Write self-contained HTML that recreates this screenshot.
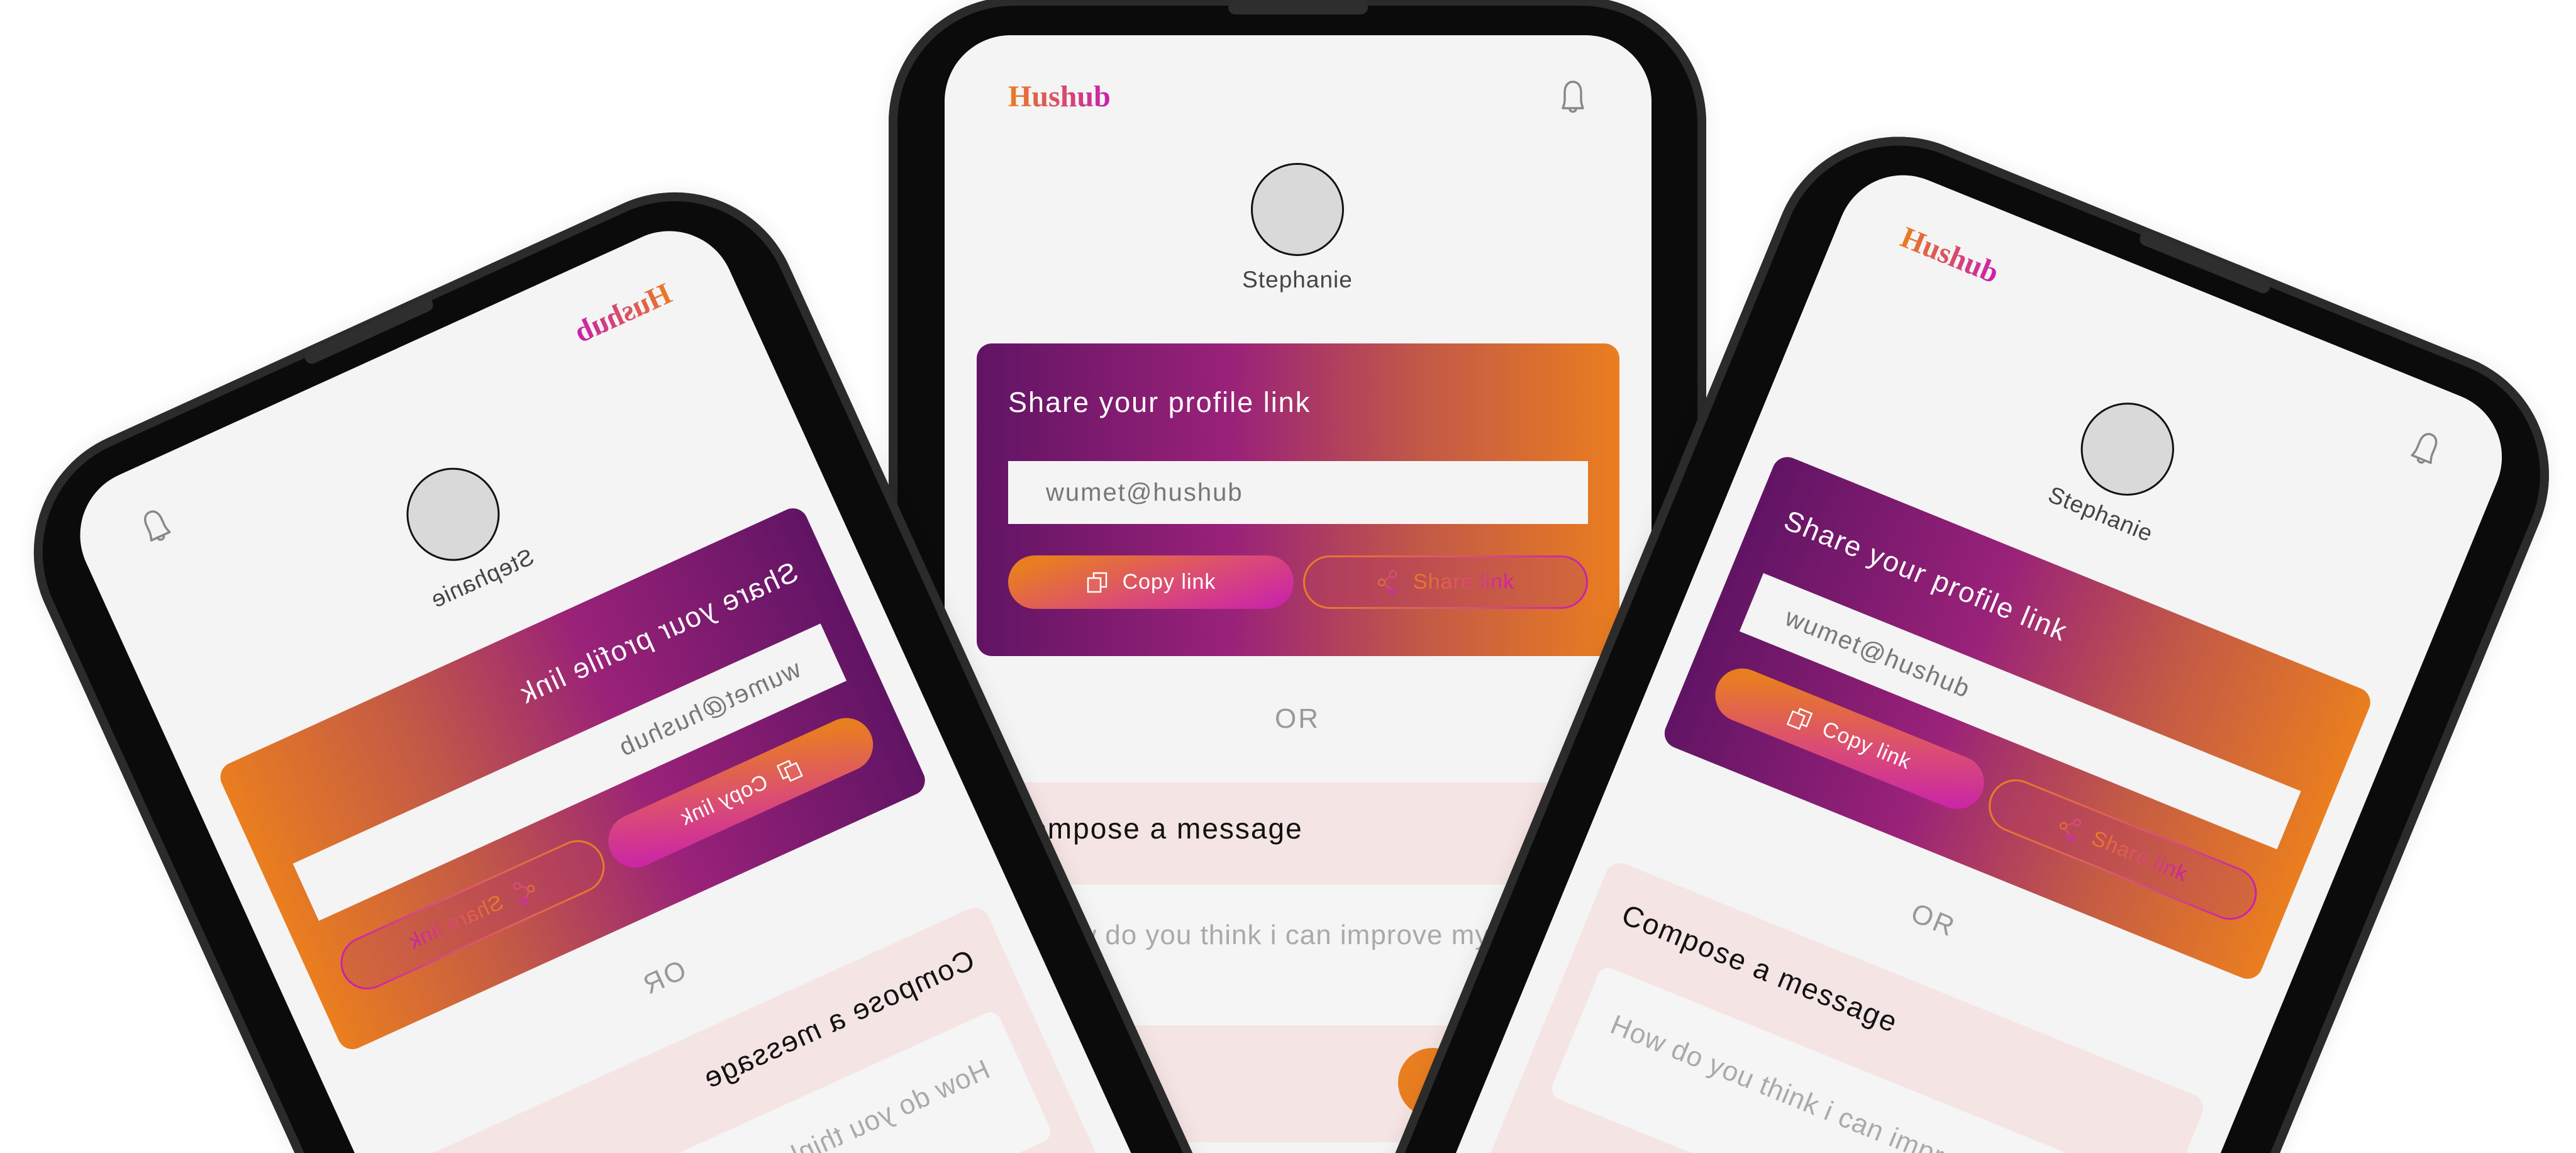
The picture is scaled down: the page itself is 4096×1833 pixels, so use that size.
<!DOCTYPE html>
<html><head><meta charset="utf-8">
<style>
*{margin:0;padding:0;box-sizing:border-box}
html,body{width:4096px;height:1833px;overflow:hidden;background:#fff}
body{position:relative;font-family:"Liberation Sans",sans-serif}
#wrap{position:absolute;left:0;top:0;width:4096px;height:1833px;overflow:hidden}
.phone{position:absolute;width:1300px;height:2300px;transform-origin:0 0;border-radius:200px;background:#0b0b0b;box-shadow:inset 0 0 0 14px #2b2b2b, 0 0 30px rgba(0,0,0,0.08)}
.spk{position:absolute;left:540px;top:6px;width:222px;height:22px;border-radius:11px;background:#2e2e2e}
.screen{position:absolute;left:89px;top:61px;width:1124px;height:2200px;border-radius:105px;background:#f4f4f4;overflow:hidden}
.logo{position:absolute;left:101px;top:70px;font-family:"Liberation Serif",serif;font-weight:bold;font-size:48px;background:linear-gradient(90deg,#ea7c22,#c91fae);-webkit-background-clip:text;background-clip:text;color:transparent}
.bell{position:absolute;left:972px;top:70px}
.av{position:absolute;left:487px;top:203px;width:148px;height:148px;border-radius:50%;background:#d9d9d9;border:3px solid #111}
.name{position:absolute;left:361px;width:400px;top:368px;text-align:center;font-size:37px;color:#444;letter-spacing:1px}
.card{position:absolute;left:51px;top:490px;width:1022px;height:497px;border-radius:24px;background:linear-gradient(90deg,#611464 0%,#9a2279 40%,#c35a46 70%,#ea7e1f 100%)}
.title{position:absolute;left:50px;top:68px;font-size:45px;color:#fff;letter-spacing:2px}
.inp{position:absolute;left:50px;top:187px;width:922px;height:100px;background:#f4f4f4;font-size:40px;color:#777;padding:28px 0 0 60px;letter-spacing:2px}
.copy{position:absolute;left:50px;top:337px;width:454px;height:85px;border-radius:43px;background:linear-gradient(160deg,#e97e20 10%,#db4e72 55%,#c81fae 100%);color:#fff;font-size:34px;display:flex;align-items:center;justify-content:center;gap:22px;letter-spacing:1px}
.share{position:absolute;left:519px;top:337px;width:453px;height:85px;border-radius:43px;padding:3px;background:linear-gradient(90deg,#e97e20,#d8507a 60%,#c81fae)}
.share .in{width:100%;height:100%;border-radius:40px;background:linear-gradient(90deg,#ad3a62,#d3683a);font-size:34px;display:flex;align-items:center;justify-content:center;gap:22px;letter-spacing:1px}
.share span{background:linear-gradient(90deg,#ea7e22,#c81fae);-webkit-background-clip:text;background-clip:text;color:transparent}
.or{position:absolute;left:461px;width:200px;top:1062px;text-align:center;font-size:44px;color:#999;letter-spacing:3px}
.comp{position:absolute;left:51px;top:1188px;width:1022px;height:572px;border-radius:24px;background:#f5e4e4}
.ctitle{position:absolute;left:50px;top:46px;font-size:46px;color:#111;letter-spacing:2px}
.ta{position:absolute;left:50px;top:162px;width:922px;height:224px;border-radius:18px;background:#f5f5f5;font-size:44px;color:#aaa;padding:56px 0 0 50px;white-space:nowrap;overflow:hidden;letter-spacing:1px}
.send{position:absolute;left:670px;top:422px;width:110px;height:110px;border-radius:50%;background:#e97e20}
</style></head><body>
<div id="wrap">

<!-- center phone -->
<div class="phone" style="left:1413px;top:-5px;">
<div class="spk"></div>
<div class="screen">
<div class="logo">Hushub</div>
<svg class="bell" width="54" height="60" viewBox="0 0 54 60"><path d="M27 4c-9 0-13 8-13 17v12c0 5-2 10-3 13h32c-1-3-3-8-3-13V21c0-9-4-17-13-17z M11 46h32 M22 47c0 6 10 6 10 0" fill="none" stroke="#888" stroke-width="3.5" stroke-linejoin="round"/></svg>
<div class="av"></div>
<div class="name">Stephanie</div>
<div class="card">
<div class="title">Share your profile link</div>
<div class="inp">wumet@hushub</div>
<div class="copy"><svg width="36" height="34" viewBox="0 0 36 34"><rect x="12" y="2" width="20" height="22" fill="none" stroke="#fff" stroke-width="2.5"/><rect x="3" y="10" width="20" height="22" fill="#e26460" stroke="#fff" stroke-width="2.5"/></svg><span>Copy link</span></div>
<div class="share"><div class="in"><svg width="36" height="40" viewBox="0 0 36 40"><circle cx="26" cy="7" r="5" fill="none" stroke="#d94a7a" stroke-width="2.5"/><circle cx="8" cy="20" r="5" fill="none" stroke="#e36a3a" stroke-width="2.5"/><circle cx="26" cy="33" r="5" fill="none" stroke="#c92fae" stroke-width="2.5"/><path d="M12 17l10-7M12 23l10 7" stroke="#d94a7a" stroke-width="2.5"/></svg><span>Share link</span></div></div>
</div>
<div class="or">OR</div>
<div class="comp">
<div class="ctitle">Compose a message</div>
<div class="ta">How do you think i can improve my writing?</div>
<div class="send"></div>
</div>
</div>
</div>

<!-- left phone (mirrored) -->
<div class="phone" style="left:0;top:0;transform:matrix(-0.91,0.414,0.414,0.91,1172,241);">
<div class="spk"></div>
<div class="screen">
<div class="logo">Hushub</div>
<svg class="bell" width="54" height="60" viewBox="0 0 54 60"><path d="M27 4c-9 0-13 8-13 17v12c0 5-2 10-3 13h32c-1-3-3-8-3-13V21c0-9-4-17-13-17z M11 46h32 M22 47c0 6 10 6 10 0" fill="none" stroke="#888" stroke-width="3.5" stroke-linejoin="round"/></svg>
<div class="av"></div>
<div class="name">Stephanie</div>
<div class="card">
<div class="title">Share your profile link</div>
<div class="inp">wumet@hushub</div>
<div class="copy"><svg width="36" height="34" viewBox="0 0 36 34"><rect x="12" y="2" width="20" height="22" fill="none" stroke="#fff" stroke-width="2.5"/><rect x="3" y="10" width="20" height="22" fill="#e26460" stroke="#fff" stroke-width="2.5"/></svg><span>Copy link</span></div>
<div class="share"><div class="in"><svg width="36" height="40" viewBox="0 0 36 40"><circle cx="26" cy="7" r="5" fill="none" stroke="#d94a7a" stroke-width="2.5"/><circle cx="8" cy="20" r="5" fill="none" stroke="#e36a3a" stroke-width="2.5"/><circle cx="26" cy="33" r="5" fill="none" stroke="#c92fae" stroke-width="2.5"/><path d="M12 17l10-7M12 23l10 7" stroke="#d94a7a" stroke-width="2.5"/></svg><span>Share link</span></div></div>
</div>
<div class="or">OR</div>
<div class="comp">
<div class="ctitle">Compose a message</div>
<div class="ta">How do you think i can improve my writing?</div>
<div class="send"></div>
</div>
</div>
</div>

<!-- right phone -->
<div class="phone" style="left:0;top:0;transform:matrix(0.927,0.376,-0.381,0.925,2909,157);">
<div class="spk"></div>
<div class="screen">
<div class="logo">Hushub</div>
<svg class="bell" width="54" height="60" viewBox="0 0 54 60"><path d="M27 4c-9 0-13 8-13 17v12c0 5-2 10-3 13h32c-1-3-3-8-3-13V21c0-9-4-17-13-17z M11 46h32 M22 47c0 6 10 6 10 0" fill="none" stroke="#888" stroke-width="3.5" stroke-linejoin="round"/></svg>
<div class="av"></div>
<div class="name">Stephanie</div>
<div class="card">
<div class="title">Share your profile link</div>
<div class="inp">wumet@hushub</div>
<div class="copy"><svg width="36" height="34" viewBox="0 0 36 34"><rect x="12" y="2" width="20" height="22" fill="none" stroke="#fff" stroke-width="2.5"/><rect x="3" y="10" width="20" height="22" fill="#e26460" stroke="#fff" stroke-width="2.5"/></svg><span>Copy link</span></div>
<div class="share"><div class="in"><svg width="36" height="40" viewBox="0 0 36 40"><circle cx="26" cy="7" r="5" fill="none" stroke="#d94a7a" stroke-width="2.5"/><circle cx="8" cy="20" r="5" fill="none" stroke="#e36a3a" stroke-width="2.5"/><circle cx="26" cy="33" r="5" fill="none" stroke="#c92fae" stroke-width="2.5"/><path d="M12 17l10-7M12 23l10 7" stroke="#d94a7a" stroke-width="2.5"/></svg><span>Share link</span></div></div>
</div>
<div class="or">OR</div>
<div class="comp">
<div class="ctitle">Compose a message</div>
<div class="ta">How do you think i can improve my writing?</div>
<div class="send"></div>
</div>
</div>
</div>

</div>
</body></html>
